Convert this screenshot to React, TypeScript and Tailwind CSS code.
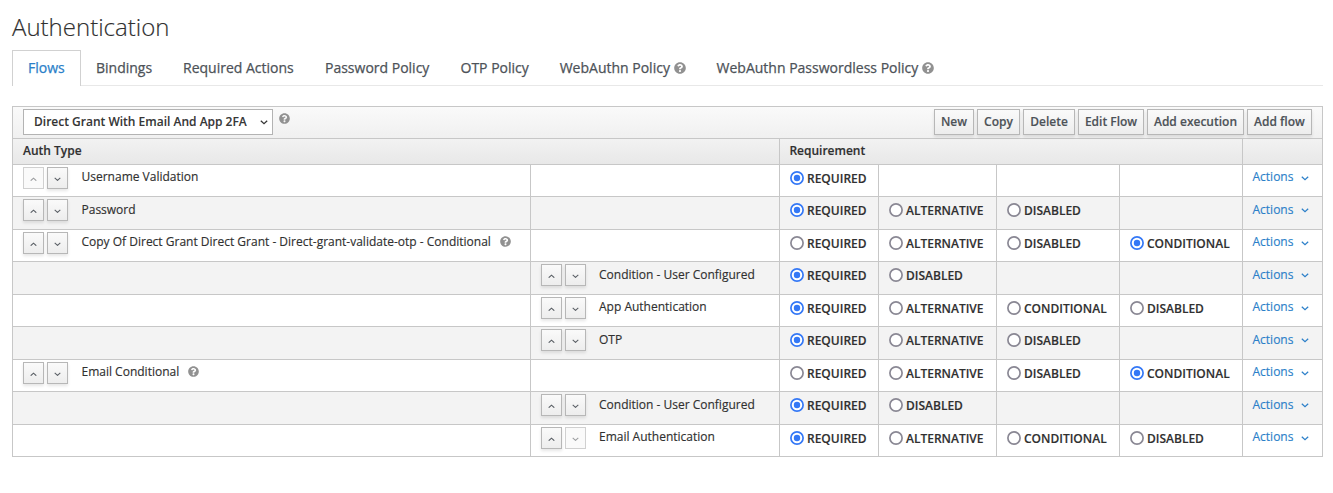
import React from "react";
import { FaQuestionCircle } from "react-icons/fa";

type Option = [label: string, checked?: boolean];
type Row = {
  name: string;
  nested?: boolean;
  help?: boolean;
  noUp?: boolean;
  noDown?: boolean;
  options: Option[];
};

const rows: Row[] = [
  { name: "Username Validation", noUp: true, options: [["REQUIRED", true]] },
  { name: "Password", options: [["REQUIRED", true], ["ALTERNATIVE"], ["DISABLED"]] },
  {
    name: "Copy Of Direct Grant Direct Grant - Direct-grant-validate-otp - Conditional",
    help: true,
    options: [["REQUIRED"], ["ALTERNATIVE"], ["DISABLED"], ["CONDITIONAL", true]],
  },
  { name: "Condition - User Configured", nested: true, options: [["REQUIRED", true], ["DISABLED"]] },
  {
    name: "App Authentication",
    nested: true,
    options: [["REQUIRED", true], ["ALTERNATIVE"], ["CONDITIONAL"], ["DISABLED"]],
  },
  { name: "OTP", nested: true, options: [["REQUIRED", true], ["ALTERNATIVE"], ["DISABLED"]] },
  {
    name: "Email Conditional",
    help: true,
    options: [["REQUIRED"], ["ALTERNATIVE"], ["DISABLED"], ["CONDITIONAL", true]],
  },
  { name: "Condition - User Configured", nested: true, options: [["REQUIRED", true], ["DISABLED"]] },
  {
    name: "Email Authentication",
    nested: true,
    noDown: true,
    options: [["REQUIRED", true], ["ALTERNATIVE"], ["CONDITIONAL"], ["DISABLED"]],
  },
];

const tabs = [
  { label: "Bindings", width: "w-[87px]" },
  { label: "Required Actions", width: "w-[142px]" },
  { label: "Password Policy", width: "w-[135.5px]" },
  { label: "OTP Policy", width: "w-[99.2px]" },
  { label: "WebAuthn Policy", width: "w-[156.9px]", help: true },
  { label: "WebAuthn Passwordless Policy", width: "w-[260px]", help: true },
];

const buttons = [
  { label: "New", width: "w-[40px]" },
  { label: "Copy", width: "w-[43px]" },
  { label: "Delete", width: "w-[52px]" },
  { label: "Edit Flow", width: "w-[66px]" },
  { label: "Add execution", width: "w-[97px]" },
  { label: "Add flow", width: "w-[65px]" },
];

function Angle({ up = false, className = "" }: { up?: boolean; className?: string }) {
  return (
    <svg viewBox="0 0 8 5" className={className} fill="none" stroke="currentColor" strokeWidth="1.2">
      <path d={up ? "M0.8 4.2 L4 1.2 L7.2 4.2" : "M0.8 0.8 L4 3.8 L7.2 0.8"} />
    </svg>
  );
}

function MoveButton({ up, disabled }: { up?: boolean; disabled?: boolean }) {
  return (
    <button
      disabled={disabled}
      className={
        disabled
          ? "flex h-[22px] w-[21px] items-center justify-center border border-[#d0d0d0] bg-[#fafafa] pt-[2px] text-[#9c9ea0]"
          : "flex h-[22px] w-[21px] items-center justify-center border border-[#b7b7b7] bg-linear-to-b from-[#fafafa] to-[#ededed] pt-[2px] text-[#5a5f65] shadow-[0_2px_3px_rgba(3,3,3,0.1)]"
      }
    >
      <Angle up={up} className="h-[4.5px] w-[7px]" />
    </button>
  );
}

function Radio({ checked }: { checked?: boolean }) {
  return (
    <svg viewBox="0 0 14 14" className="size-[14px] shrink-0">
      <circle cx="7" cy="7" r="6.1" fill="#fff" stroke={checked ? "#3478f6" : "#8a8894"} strokeWidth="1.7" />
      {checked && <circle cx="7" cy="7" r="3.2" fill="#3478f6" />}
    </svg>
  );
}

function NameCell({ row, odd }: { row: Row; odd: boolean }) {
  return (
    <div className="flex items-start border-l border-[#c7c7c7] pl-[10px]">
      <div className="flex gap-[3px] pt-[2px]">
        <MoveButton up disabled={row.noUp} />
        <MoveButton disabled={row.noDown} />
      </div>
      <span className={`leading-[18px] ${row.nested ? "ml-[13px]" : "ml-[13.5px]"} ${odd ? "pt-[4px]" : "pt-[3px]"}`}>
        {row.name}
      </span>
      {row.help && <FaQuestionCircle className="mt-[6px] ml-[9px] size-[11px] text-[#919191]" />}
    </div>
  );
}

function EmptyCell() {
  return <div className="border-l border-[#c7c7c7]" />;
}

export default function App() {
  return (
    <div className="h-[493px] w-[1333px] overflow-hidden bg-white pl-[12px] font-['Open_Sans',sans-serif] text-[12px] text-[#303030] whitespace-nowrap [-webkit-text-stroke:0.15px]">
      <h1 className="h-[50px] pt-[11px] text-[24px] leading-[32px] font-light">Authentication</h1>

      <div className="flex h-[36px] w-[1311px] text-[14px] leading-[20px] text-[#4d5258] [-webkit-text-stroke:0.25px]">
        <div className="w-[69px] border border-b-0 border-[#d1d1d1] pt-[7px] pl-[15px] text-[#2b7fc9]">Flows</div>
        <div className="flex grow border-b border-[#e8e8e8] pt-[8px] pl-[15px]">
          {tabs.map((t) => (
            <div key={t.label} className={`flex shrink-0 ${t.width}`}>
              {t.label}
              {t.help && <FaQuestionCircle className="mt-[4px] ml-[4px] size-[12px] text-[#919191]" />}
            </div>
          ))}
        </div>
      </div>

      <div className="mt-[20px] w-[1311px] border-r border-b border-[#c7c7c7]">
        <div className="flex h-[32px] items-start border-t border-l border-[#c7c7c7] bg-linear-to-b from-[#fafafa] to-[#f0f0f0] pt-[2px] pr-[10px] pl-[10px] font-semibold">
          <div className="flex h-[26px] w-[250px] items-center justify-between border border-[#b3b3b3] bg-white pr-[4px] pb-[1px] pl-[10px] text-black/80">
            Direct Grant With Email And App 2FA
            <Angle className="mt-[2px] h-[5px] w-[8px]" />
          </div>
          <FaQuestionCircle className="mt-[4px] ml-[6px] size-[11px] text-[#919191]" />
          <div className="ml-auto flex gap-[3px] text-[#4d5258]">
            {buttons.map((b) => (
              <button
                key={b.label}
                className={`flex h-[26px] items-center justify-center border border-[#b7b7b7] bg-linear-to-b from-[#fafafa] to-[#ededed] pb-[1px] shadow-[0_2px_3px_rgba(3,3,3,0.1)] ${b.width}`}
              >
                {b.label}
              </button>
            ))}
          </div>
        </div>

        <div className="grid h-[26px] grid-cols-[767px_463px_80px] border-t border-[#c7c7c7] bg-linear-to-b from-[#f2f2f2] to-[#e8e8e8] leading-[18px] font-semibold">
          <div className="border-l border-[#c7c7c7] pt-[3px] pl-[10px]">Auth Type</div>
          <div className="border-l border-[#c7c7c7] pt-[3px] pl-[9.4px]">Requirement</div>
          <EmptyCell />
        </div>

        {rows.map((row, i) => {
          const odd = i % 2 === 1;
          return (
            <div
              key={i}
              className={`grid grid-cols-[518px_249px_99px_118px_123px_123px_80px] border-t border-[#c7c7c7] ${
                odd ? "h-[33px] bg-[#f3f3f3]" : "h-[32px] bg-white"
              }`}
            >
              {row.nested ? <EmptyCell /> : <NameCell row={row} odd={odd} />}
              {row.nested ? <NameCell row={row} odd={odd} /> : <EmptyCell />}
              {[0, 1, 2, 3].map((c) => {
                const opt = row.options[c];
                return (
                  <div key={c} className="flex items-start border-l border-[#c7c7c7] pt-[6px] pl-[10px]">
                    {opt && (
                      <>
                        <Radio checked={opt[1]} />
                        <span className="ml-[3px] leading-[16px] font-semibold">{opt[0]}</span>
                      </>
                    )}
                  </div>
                );
              })}
              <div
                className={`flex items-start border-l border-[#c7c7c7] pl-[9.5px] leading-[18px] text-[#2b7fc9] ${
                  odd ? "pt-[4px]" : "pt-[3px]"
                }`}
              >
                Actions
                <Angle className={`ml-[7.5px] h-[5px] w-[8px] ${odd ? "mt-[7px]" : "mt-[8px]"}`} />
              </div>
            </div>
          );
        })}
      </div>
    </div>
  );
}
